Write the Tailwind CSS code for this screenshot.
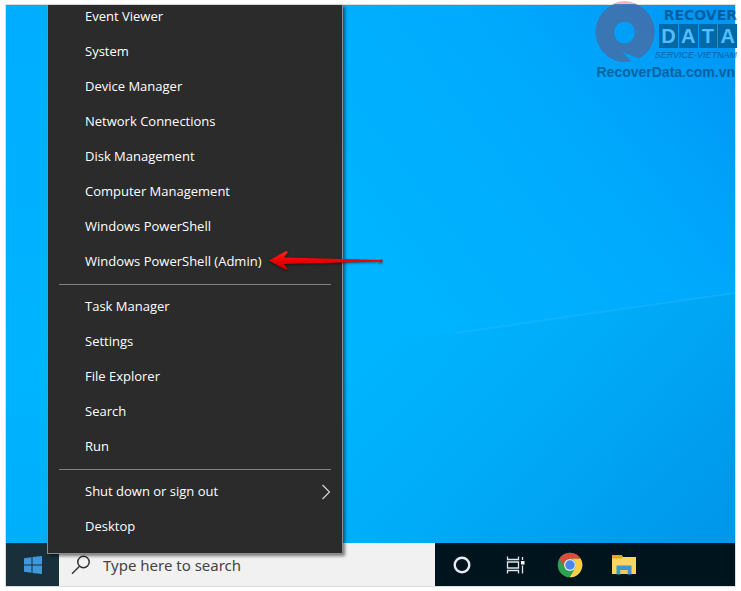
<!DOCTYPE html>
<html lang="en">
<head>
<meta charset="utf-8">
<meta name="viewport" content="width=device-width, initial-scale=1">
<title>Windows desktop</title>
<script src="https://cdn.jsdelivr.net/npm/@tailwindcss/browser@4"></script>
</head>
<body class="bg-white font-['Noto_Sans','Open_Sans',sans-serif]">
<div class="relative flex h-screen flex-col px-[5px] pt-1 pb-1">
  <main class="relative flex flex-1 flex-col border border-[#dcdcdc]">
    <!-- wallpaper -->
    <div class="relative flex-1 overflow-hidden bg-[#00b0fe]">
      <svg class="absolute inset-0 size-full" viewBox="0 0 729 538" preserveAspectRatio="none" aria-hidden="true">
        <defs>
          <linearGradient id="top" x1="0.1" y1="0.7" x2="1" y2="0.1"><stop offset="0" stop-color="#00b4ff"/><stop offset=".6" stop-color="#00a8fc"/><stop offset="1" stop-color="#0096f5"/></linearGradient>
          <linearGradient id="low" x1="0" y1="0.2" x2="1" y2="0.8"><stop offset="0" stop-color="#00b6ff"/><stop offset=".5" stop-color="#00aaf7"/><stop offset="1" stop-color="#0098ea"/></linearGradient>
          <linearGradient id="left" x1="0" y1="0" x2="0" y2="1"><stop offset="0" stop-color="#00adff"/><stop offset=".7" stop-color="#00b4ff"/><stop offset="1" stop-color="#00aefa"/></linearGradient>
        </defs>
        <path d="M336 0H729V288L560 318L336 344Z" fill="url(#top)"/>
        <path d="M336 340L450 328L560 312L729 288V538H336Z" fill="url(#low)"/>
        <path d="M0 0H337V538H0Z" fill="url(#left)"/>
        <path d="M450 328L560 312L729 288" fill="none" stroke="#35bdff" stroke-opacity=".3" stroke-width="2"/>
      </svg>
    </div>

    <!-- taskbar -->
    <footer class="flex h-[43px] bg-[#00141e]">
      <button type="button" aria-label="Start" class="flex w-[53px] shrink-0 items-center justify-center bg-[#19303a]">
        <svg class="h-5 w-5" viewBox="0 0 20 20" fill="#3f97dc"><path d="M1 3.300 8.500 2.300V9.500H1ZM9.500 2.100 19 1V9.500H9.500ZM1 10.500H8.500V17.700L1 16.700ZM9.500 10.500H19V19L9.500 17.900Z"/></svg>
      </button>
      <label class="flex max-w-[376px] flex-1 items-center gap-3 bg-[#f1f1f1] pl-3">
        <svg class="h-5 w-5 shrink-0" viewBox="0 0 20 20" fill="none" stroke="#333" stroke-width="1.500"><circle cx="12.500" cy="7" r="5.700"/><path d="M8.500 11.200 1 18.700"/></svg>
        <input type="text" aria-label="Search" placeholder="Type here to search" class="min-w-0 flex-1 bg-transparent text-[15px] leading-5 outline-none placeholder:text-[#444]">
      </label>
      <button type="button" aria-label="Cortana" class="flex w-[54px] items-center justify-center">
        <svg class="h-5 w-5" viewBox="0 0 20 20" fill="none" stroke="#e6ebf2" stroke-width="2.400"><circle cx="10" cy="10" r="7.300"/></svg>
      </button>
      <button type="button" aria-label="Task view" class="flex w-[54px] items-center justify-center">
        <svg class="h-5 w-5" viewBox="0 0 20 20" fill="none" stroke="#dfe4e8" stroke-width="1.300"><path d="M1.500 1.500V4.500H12.500V1.500M1.500 18.500V15.500H12.500V18.500M1.500 7H12.500V13H1.500ZM16.500 2V5M16.500 10.500V18.500"/><path d="M15 6H18.500V9.500H15Z" fill="#fff" stroke="none"/></svg>
      </button>
      <button type="button" aria-label="Google Chrome" class="flex w-[54px] items-center justify-center">
        <svg class="h-[26px] w-[26px]" viewBox="0 0 26 26"><circle cx="13" cy="13" r="12.300" fill="#2da14f"/><path d="M2.350 6.850A12.300 12.300 0 0 1 23.650 6.850H13A6.150 6.150 0 0 0 7.700 16.100Z" fill="#dc4b3e"/><path d="M23.650 6.850A12.300 12.300 0 0 1 12.700 25.300L18.300 16.100A6.150 6.150 0 0 0 13 6.850Z" fill="#fdce45"/><circle cx="13" cy="13" r="6" fill="#e8e5e4"/><circle cx="13" cy="13" r="4.700" fill="#4a86ee"/></svg>
      </button>
      <button type="button" aria-label="File Explorer" class="flex w-[54px] items-center justify-center">
        <svg class="h-[22px] w-[26px]" viewBox="0 0 26 22"><path d="M1 1H10.500L12 3H25V20H1Z" fill="#fcd462"/><path d="M1 1H10.500L11.800 3 10.500 4.500H1Z" fill="#e9a51c"/><path d="M5.500 11.500H20.500V20.500H16.500V16H9.500V20.500H5.500Z" fill="#3e95cf"/><path d="M9.500 16H16.500V20H9.500Z" fill="#f6c857"/></svg>
      </button>
    </footer>

    <!-- power user menu, anchored above the Start button -->
    <nav aria-label="Power user menu" class="absolute top-0 bottom-[32px] left-[41px] flex w-[296px] flex-col justify-end overflow-hidden border-x border-b border-[#8b8b8b] bg-[#2b2b2b] pb-[9px] font-['Open_Sans','Noto_Sans',sans-serif] text-[13px] leading-[35px] text-white shadow-[2px_2px_3px_rgba(0,0,0,0.5)]">
      <button type="button" class="h-[35px] shrink-0 pl-[37px] text-left">Event Viewer</button>
      <button type="button" class="h-[35px] shrink-0 pl-[37px] text-left">System</button>
      <button type="button" class="h-[35px] shrink-0 pl-[37px] text-left">Device Manager</button>
      <button type="button" class="h-[35px] shrink-0 pl-[37px] text-left">Network Connections</button>
      <button type="button" class="h-[35px] shrink-0 pl-[37px] text-left">Disk Management</button>
      <button type="button" class="h-[35px] shrink-0 pl-[37px] text-left">Computer Management</button>
      <button type="button" class="h-[35px] shrink-0 pl-[37px] text-left">Windows PowerShell</button>
      <button type="button" class="h-[35px] shrink-0 pl-[37px] text-left">Windows PowerShell (Admin)</button>
      <hr class="mx-[11px] mt-[5px] mb-1 shrink-0 border-[#808080]">
      <button type="button" class="h-[35px] shrink-0 pl-[37px] text-left">Task Manager</button>
      <button type="button" class="h-[35px] shrink-0 pl-[37px] text-left">Settings</button>
      <button type="button" class="h-[35px] shrink-0 pl-[37px] text-left">File Explorer</button>
      <button type="button" class="h-[35px] shrink-0 pl-[37px] text-left">Search</button>
      <button type="button" class="h-[35px] shrink-0 pl-[37px] text-left">Run</button>
      <hr class="mx-[11px] mt-[5px] mb-1 shrink-0 border-[#808080]">
      <button type="button" class="flex h-[35px] shrink-0 items-center justify-between pr-[11px] pl-[37px] text-left">Shut down or sign out
        <svg class="h-4 w-[10px]" viewBox="0 0 10 16" fill="none" stroke="#d4d4d4" stroke-width="1.200"><path d="M1.500 1 8.500 8 1.500 15"/></svg>
      </button>
      <button type="button" class="h-[35px] shrink-0 pl-[37px] text-left">Desktop</button>
    </nav>

    <!-- arrow pointing at the admin entry -->
    <svg class="absolute top-[244px] left-[262px] h-6 w-[118px] drop-shadow-[0_1px_1px_rgba(0,0,0,0.5)]" viewBox="0 0 118 24" aria-hidden="true">
      <defs><linearGradient id="arrow" x1="0" y1="0" x2="0" y2="1"><stop offset="0" stop-color="#ff2a1a"/><stop offset=".5" stop-color="#f00000"/><stop offset="1" stop-color="#b80000"/></linearGradient></defs>
      <path d="M1 11.500 18 2 20 3 16 8.500 112 11V12.500L16 15 20 20 18 21Z" fill="url(#arrow)"/>
      <circle cx="113" cy="12" r="1.700" fill="#a3202c"/>
    </svg>
  </main>

  <!-- watermark -->
  <div class="absolute top-0 right-1 flex flex-col items-end text-[#003a66]/60">
    <div class="flex items-start">
      <svg class="h-[63px] w-[61px]" viewBox="0 0 61 64" aria-hidden="true"><path fill-rule="evenodd" fill="#4070ac" fill-opacity=".9" d="M30.500 2A30 30.500 0 0 1 45 59.500L28 52.500 37.500 62.300A30 30.500 0 1 1 30.500 2ZM30.500 22A10.500 11 0 1 0 30.500 44A10.500 11 0 1 0 30.500 22Z"/><path fill="#f3b6bd" d="M18 4A30 30.500 0 0 1 43 4Z"/></svg>
      <div class="flex flex-col items-end pt-[7px]">
        <div class="font-['DejaVu_Sans',sans-serif] text-[14px] leading-[17px] font-bold">RECOVER</div>
        <div class="flex w-[78px] gap-px font-['Liberation_Sans',sans-serif] text-[20px] leading-[24px] font-bold text-[#55bdfb]">
          <span class="flex-1 bg-[#0069aa] text-center">D</span><span class="flex-1 bg-[#0069aa] text-center">A</span><span class="flex-1 bg-[#0069aa] text-center">T</span><span class="flex-1 bg-[#0069aa] text-center">A</span>
        </div>
        <div class="font-['Liberation_Sans',sans-serif] text-[9px] leading-[15px] whitespace-nowrap italic">SERVICE-VIETNAM</div>
      </div>
    </div>
    <div class="pr-0.5 font-['Liberation_Sans',sans-serif] text-[14px] leading-[18px] font-bold">RecoverData.com.vn</div>
  </div>
</div>
</body>
</html>
